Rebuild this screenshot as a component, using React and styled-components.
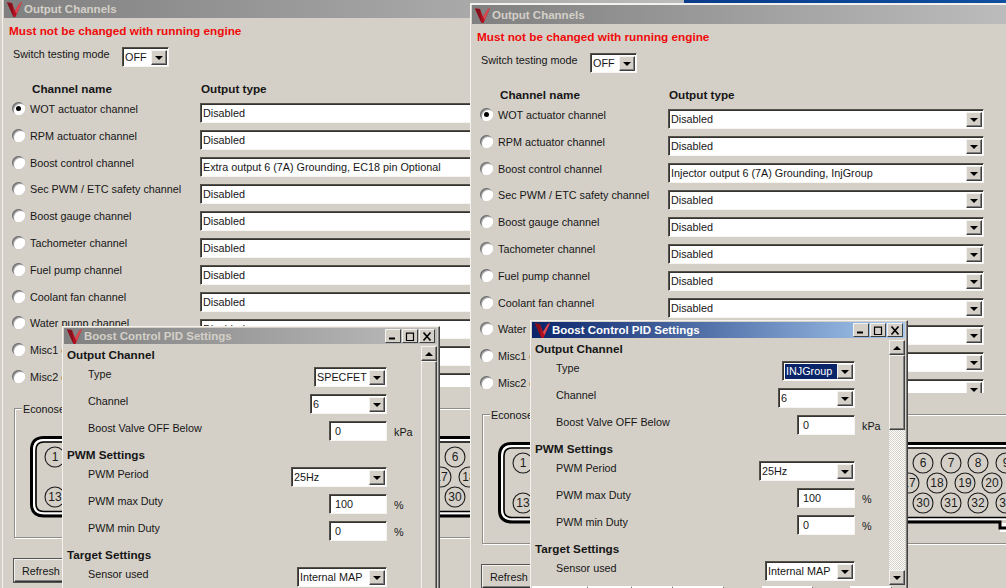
import React from "react";
import styled, { createGlobalStyle } from "styled-components";

const Global = createGlobalStyle`
  html, body { margin: 0; padding: 0; background: #d4d0c8; }
  * { box-sizing: border-box; }
`;
const face = "#d4d0c8";
const font = `"Liberation Sans", Arial, sans-serif`;

const Desktop = styled.div`
  position: relative; width: 1006px; height: 588px; overflow: hidden; background: ${face};
  font-family: ${font}; font-size: 10.8px; color: #161616;
`;
const BackStrip = styled.div`
  position: absolute; left: 684px; top: 0; width: 322px; height: 3px;
  background: linear-gradient(90deg, #0a3c8c, #0f4fa0);
`;
const Win = styled.section`
  position: absolute; left: ${p => p.$left}px; top: ${p => p.$top}px; width: ${p => p.$width}px; height: 620px;
  background: ${face}; border-top: 2px solid #f4f2ee; border-left: 1px solid #f4f2ee; padding-left: 1px; overflow: hidden;
`;
const TitleBar = styled.header`
  display: flex; align-items: center; gap: 2px; height: ${p => p.$h}px; padding: ${p => p.$drop || 0}px 0 0 3px;
  font-weight: 700; font-size: 11.5px; color: ${p => p.$active ? "#fff" : "#d4d0c8"};
  background: ${p => p.$active ? "linear-gradient(90deg,#0a246a,#a6caf0)" : "linear-gradient(90deg,#808080,#bcbcbc)"};
`;
const TitleText = styled.span` flex: 1; white-space: nowrap; `;
const Body = styled.div` padding-left: 5px; `;
const Warning = styled.div` height: 18px; margin-top: 4px; line-height: 18px; font-weight: 700; font-size: 11.75px; color: #f00a0a; `;
const ModeRow = styled.div` display: flex; margin: 7px 0 0 4px; height: 20px; `;
const ModeLabel = styled.span` width: 109px; line-height: 14px; white-space: nowrap; `;
const Head = styled.div` display: flex; height: 18px; margin-top: 13px; padding-left: 23px; font-weight: 700; font-size: 11.7px; line-height: 18px; `;
const HeadName = styled.span` width: 169px; `;
const Columns = styled.div` display: flex; height: 288px; margin-top: 1px; `;
const Names = styled.div` display: flex; flex-direction: column; gap: 7px; width: 191px; padding-left: 3px; `;
const NameRow = styled.label` display: flex; align-items: center; gap: 5px; height: 20px; white-space: nowrap; `;
const Radio = styled.span`
  position: relative; flex: none; width: 13px; height: 13px; margin-top: -1px; border-radius: 50%; background: #fff;
  box-shadow: inset 1px 1px 0 #6f6f6f, inset -1px -1px 0 #fff, inset 2px 2px 0 #a8a8a8;
  &::after {
    content: ""; display: ${p => p.$on ? "block" : "none"}; position: absolute; left: 4px; top: 4px;
    width: 5px; height: 5px; border-radius: 50%; background: #000;
  }
`;
const Types = styled.div` display: flex; flex-direction: column; gap: 7px; width: 316px; height: 288px; padding-top: 4px; overflow: hidden; flex: none; `;
const ComboBox = styled.div`
  display: flex; flex: none; width: ${p => p.$w}px; height: 20px; padding: 2px 1px 1px 2px; background: #fff;
  border-top: 1px solid #55524c; border-left: 1px solid #55524c; border-right: 1px solid #f6f5f2; border-bottom: 1px solid #f6f5f2;
  box-shadow: inset 1px 1px 0 #35332f;
`;
const ComboText = styled.span`
  flex: 1; min-width: 0; padding-left: ${p => p.$selected ? 1 : 0}px; line-height: 14px; white-space: nowrap; overflow: hidden;
  background: ${p => p.$selected ? "#0a246a" : "transparent"}; color: ${p => p.$selected ? "#fff" : "#161616"};
`;
const ArrowBtn = styled.span`
  flex: none; display: flex; align-items: center; justify-content: center; width: 16px; background: ${face};
  border-top: 1px solid #f4f2ee; border-left: 1px solid #f4f2ee; border-right: 1px solid #404040; border-bottom: 1px solid #404040;
  box-shadow: inset -1px -1px 0 #808080;
`;
const Tri = styled.i`
  display: block; width: 0; height: 0; border-left: 4px solid transparent; border-right: 4px solid transparent;
  ${p => p.$up ? "border-bottom: 4px solid #000;" : "border-top: 4px solid #000;"}
`;
const Group = styled.div`
  position: relative; width: 700px; height: 130px; margin: 21px 0 0 5px; padding: 27px 0 0 15px;
  border: 1px solid #8f8d87; box-shadow: inset 1px 1px 0 #fff, 1px 1px 0 #fff;
`;
const Legend = styled.span` position: absolute; left: 7px; top: -8px; padding: 0 1px; line-height: 16px; background: ${face}; `;
const Refresh = styled.button`
  display: block; width: 84px; height: 23px; margin: 21px 0 0 5px; padding: 0 0 0 7px; text-align: left;
  font: inherit; color: inherit; background: ${face}; border: 1px solid #000; border-color: #f4f2ee #303030 #303030 #f4f2ee;
  box-shadow: inset -1px -1px 0 #808080; outline: 1px solid #555;
`;
const Dialog = styled.section`
  position: absolute; left: ${p => p.$left}px; top: ${p => p.$top}px; width: 378px; height: 300px; padding: 1px 2px 0 1px;
  background: ${face}; border: 1px solid #404040; border-top-color: #f4f2ee; border-left-color: #f4f2ee;
  box-shadow: inset -1px 0 0 #808080; overflow: hidden;
`;
const DlgBtns = styled.div` display: flex; gap: 1px; margin-right: 2px; `;
const DlgBtn = styled.span`
  display: flex; align-items: center; justify-content: center; width: 16px; height: 14px; background: ${face};
  border: 1px solid; border-color: #f4f2ee #404040 #404040 #f4f2ee;
`;
const DlgMain = styled.div` display: flex; margin-top: 2px; `;
const Content = styled.div` flex: none; width: 357px; height: 245px; padding-top: 2px; overflow: hidden; `;
const Section = styled.div` height: ${p => p.$h}px; padding-left: 3px; font-weight: 700; font-size: 11.7px; line-height: 13px; `;
const Row = styled.div` display: flex; height: 27px; `;
const RowLabel = styled.span` flex: 1; padding-left: 24px; line-height: 14px; white-space: nowrap; `;
const Unit = styled.span` flex: none; width: 34px; padding-left: 7px; line-height: 22px; `;
const InputBox = styled(ComboBox)` padding-left: 5px; line-height: 14px; `;
const Scroll = styled.div` display: flex; flex-direction: column; flex: none; width: 16px; height: 245px; background: repeating-conic-gradient(#d4d0c8 0 25%, #fff 0 50%) 0 0 / 2px 2px; `;
const ScrollBtn = styled.span`
  flex: none; display: flex; align-items: center; justify-content: center; height: 15px; background: ${face};
  border: 1px solid; border-color: #f4f2ee #404040 #404040 #f4f2ee; box-shadow: inset -1px -1px 0 #808080;
`;
const Thumb = styled.span`
  flex: none; height: ${p => p.$h}px; background: ${face};
  border: 1px solid; border-color: #f4f2ee #404040 #404040 #f4f2ee; box-shadow: inset -1px -1px 0 #808080;
`;
const ScrollGap = styled.span` flex: 1; `;
const Footer = styled.div` display: flex; margin-top: 1px; `;
const FootCell = styled.span` flex: none; width: ${p => p.$w}px; height: 6px; margin-right: ${p => p.$gap || 0}px; border-top: 2px solid #fff; border-right: 1px solid #444; `;

const Logo = () => (
  <svg width="15" height="15" viewBox="0 0 15 15">
    <path d="M0 .5 L5 1 L8 9 L12.5 1.5 L15 0 L8.5 15 L6.5 15 Z" fill="#b5101f" />
    <path d="M0 .5 L5 1 L6.5 15 Z" fill="#86101c" />
    <path d="M12.5 1.5 L15 0 L9.5 12 L8 9 Z" fill="#dc4a54" />
  </svg>
);

const Combo = ({ w, v, selected }) => (
  <ComboBox $w={w}>
    <ComboText $selected={selected}>{v}</ComboText>
    <ArrowBtn><Tri /></ArrowBtn>
  </ComboBox>
);

const names = [
  "WOT actuator channel", "RPM actuator channel", "Boost control channel", "Sec PWM / ETC safety channel",
  "Boost gauge channel", "Tachometer channel", "Fuel pump channel", "Coolant fan channel",
  "Water pump channel", "Misc1 channel", "Misc2 channel",
];
const Pins = [
  [25, 21, "1"], [25, 61, "13"],
  [425, 21, "6"], [453, 21, "7"], [480, 21, "8"], [508, 21, "9"],
  [411, 41, "17"], [439, 41, "18"], [467, 41, "19"], [494, 41, "20"],
  [425, 61, "30"], [453, 61, "31"], [480, 61, "32"], [508, 61, "33"],
];
const Connector = () => (
  <svg width="700" height="90" viewBox="0 0 700 90">
    <path d="M502 81 H700 V90 H502 Z" fill="#fff" />
    <path d="M700 1.5 H14 Q1.5 1.5 1.5 14 V68 Q1.5 80 14 80 H502 V86 H700" fill="none" stroke="#000" strokeWidth="3" />
    <path d="M700 4 H14 Q4 4 4 14 V68 Q4 77 14 77 H700" fill="none" stroke="#fff" strokeWidth="2" />
    <path d="M700 6 H14 Q6 6 6 14 V68 Q6 75.5 14 75.5 H700" fill="none" stroke="#000" strokeWidth="1.6" />
    {Pins.map(([x, y, t]) => (
      <g key={t}>
        <circle cx={x} cy={y} r="10" fill="none" stroke="#1c1c1c" strokeWidth="1.1" />
        <text x={x} y={y + 4.2} textAnchor="middle" fontSize="12" fontFamily={font} fill="#1c1c1c">{t}</text>
      </g>
    ))}
  </svg>
);

const OutputWindow = ({ left, top, width, third }) => (
  <Win $left={left} $top={top} $width={width}>
    <TitleBar $h={19} $drop={1}><Logo /><TitleText>Output Channels</TitleText></TitleBar>
    <Body>
      <Warning>Must not be changed with running engine</Warning>
      <ModeRow><ModeLabel>Switch testing mode</ModeLabel><Combo w={47} v="OFF" /></ModeRow>
      <Head><HeadName>Channel name</HeadName><span>Output type</span></Head>
      <Columns>
        <Names>
          {names.map((n, i) => (
            <NameRow key={n}><Radio $on={i === 0} />{n}</NameRow>
          ))}
        </Names>
        <Types>
          {names.map((n, i) => (
            <Combo key={n} w={316} v={i === 2 ? third : "Disabled"} />
          ))}
        </Types>
      </Columns>
      <Group>
        <Legend>Econoseal</Legend>
        <Connector />
      </Group>
      <Refresh>Refresh</Refresh>
    </Body>
  </Win>
);

const Field = ({ label, children, unit }) => (
  <Row>
    <RowLabel>{label}</RowLabel>
    {children}
    <Unit>{unit}</Unit>
  </Row>
);

const PidDialog = ({ left, top, active, type, typeW, selected, thumb, dither }) => (
  <Dialog $left={left} $top={top}>
    <TitleBar $h={16} $active={active}>
      <Logo />
      <TitleText>Boost Control PID Settings</TitleText>
      <DlgBtns>
        <DlgBtn><svg width="10" height="8" viewBox="0 0 10 8"><path d="M1 6.5H7" stroke="#000" strokeWidth="2" /></svg></DlgBtn>
        <DlgBtn><svg width="10" height="9" viewBox="0 0 10 9"><path d="M1 1.2H9M1.5 1V8.5H8.5V1" fill="none" stroke="#000" strokeWidth="1.2" /></svg></DlgBtn>
        <DlgBtn><svg width="10" height="9" viewBox="0 0 10 9"><path d="M1.5 .5L8.5 8.5M8.5 .5L1.5 8.5" stroke="#000" strokeWidth="1.6" /></svg></DlgBtn>
      </DlgBtns>
    </TitleBar>
    <DlgMain>
      <Content>
        <Section $h={19}>Output Channel</Section>
        <Field label="Type"><Combo w={typeW} v={type} selected={selected} /></Field>
        <Field label="Channel"><Combo w={77} v="6" /></Field>
        <Field label="Boost Valve OFF Below" unit="kPa"><InputBox $w={58}>0</InputBox></Field>
        <Section $h={19}>PWM Settings</Section>
        <Field label="PWM Period"><Combo w={96} v="25Hz" /></Field>
        <Field label="PWM max Duty" unit="%"><InputBox $w={58}>100</InputBox></Field>
        <Field label="PWM min Duty" unit="%"><InputBox $w={58}>0</InputBox></Field>
        <Section $h={19}>Target Settings</Section>
        <Field label="Sensor used"><Combo w={90} v="Internal MAP" /></Field>
      </Content>
      <Scroll>
        <ScrollBtn><Tri $up /></ScrollBtn>
        <Thumb $h={thumb} />
        <ScrollGap />
        {dither && <ScrollBtn><Tri /></ScrollBtn>}
      </Scroll>
    </DlgMain>
    <Footer>
      <FootCell $w={56} /><FootCell $w={44} /><FootCell $w={41} /><FootCell $w={51} $gap={38} />
      <FootCell $w={51} $gap={37} /><FootCell $w={42} />
    </Footer>
  </Dialog>
);

export default function App() {
  return (
    <Desktop>
      <Global />
      <BackStrip />
      <OutputWindow left={2} top={-3} width={682} third="Extra output 6 (7A) Grounding, EC18 pin Optional" />
      <PidDialog left={62} top={326} type="SPECFET" typeW={73} thumb={260} />
      <OutputWindow left={470} top={3} width={536} third="Injector output 6 (7A) Grounding, InjGroup" />
      <PidDialog left={530} top={320} active type="INJGroup" typeW={73} selected thumb={75} dither />
    </Desktop>
  );
}
